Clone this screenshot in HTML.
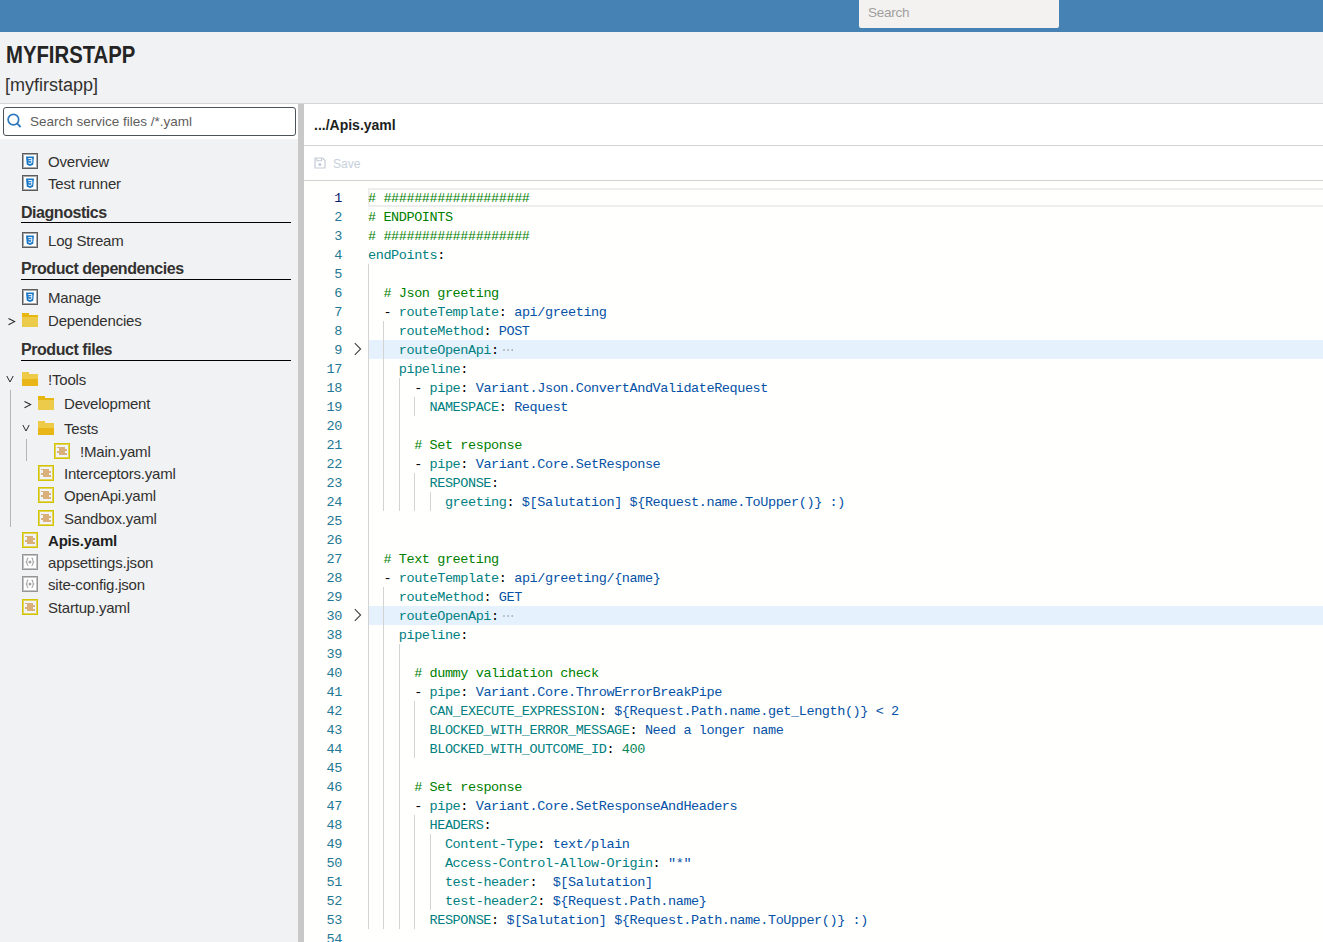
<!DOCTYPE html>
<html><head><meta charset="utf-8">
<style>
*{box-sizing:border-box}
html,body{margin:0;padding:0;width:1323px;height:942px;overflow:hidden;background:#f1f2f4;font-family:"Liberation Sans",sans-serif;color:#323130}
.topbar{position:absolute;left:0;top:0;width:1323px;height:32px;background:#4682b4}
.tsearch{position:absolute;left:859px;top:0;width:200px;height:28px;background:#f3f2f1;border-radius:0 0 2px 2px;font-size:13.5px;letter-spacing:-0.25px;color:#a19f9d;padding-left:9px;line-height:26px}
.title{position:absolute;left:6px;top:40px;font-weight:bold;font-size:23px;line-height:30px;color:#242424;transform:scaleX(0.883);transform-origin:0 0;white-space:nowrap}
.sub{position:absolute;left:5px;top:73px;font-size:18px;line-height:24px;color:#323130}
.hline{position:absolute;left:0;top:103px;width:1323px;height:1px;background:#d6d6d6}
.sidebar{position:absolute;left:0;top:104px;width:298px;height:838px;background:#f1f2f4}
.sbtop{position:absolute;left:0;top:104px;width:298px;height:35px;background:#fff}
.sinput{position:absolute;left:3px;top:107px;width:293px;height:29px;border:1px solid #4b5259;border-radius:3px;background:#fff}
.sinput .ph{position:absolute;left:26px;top:0;line-height:27px;font-size:13.5px;color:#605e5c}
.split{position:absolute;left:298px;top:104px;width:6px;height:838px;background:#c8c8c8}
.editor{position:absolute;left:304px;top:104px;width:1019px;height:838px;background:#fff}
.ehead{position:absolute;left:314px;top:114px;font-weight:bold;font-size:14px;line-height:22px;color:#201f1e}
.b1{position:absolute;left:304px;top:145px;width:1019px;height:1px;background:#d2d2d2}
.b2{position:absolute;left:304px;top:180px;width:1019px;height:1px;background:#d2d2d2}
.save{position:absolute;left:333px;top:154px;font-size:12px;line-height:20px;color:#c6cfdb}
.code{position:absolute;left:304px;top:181px;width:1019px;height:761px;background:#fffffe}
.curline{position:absolute;left:368px;top:188px;width:955px;height:19px;border:2px solid #eeeeee;border-right:none}
.ln{position:absolute;left:304px;width:38px;height:19px;line-height:19px;padding-top:1px;text-align:right;font-family:"Liberation Mono",monospace;font-size:13.5px;letter-spacing:-0.41px;color:#237893}
.ln.act{color:#0b216f}
.cl{position:absolute;left:368px;height:19px;line-height:19px;padding-top:1px;white-space:pre;font-family:"Liberation Mono",monospace;font-size:13.5px;letter-spacing:-0.41px;color:#000}
.foldbg{position:absolute;left:368px;width:955px;height:19px;background:#e5f1fd}
.ig{position:absolute;width:1px;height:19px;background:#d3d3d3}
.chev{position:absolute;left:353px}
.fe{position:absolute;top:0;margin-left:1.3px}
.ico{position:absolute;width:16px;height:16px;border:1px solid #5c5c5c;box-shadow:inset 0 0 0 1px #a9a9a9;background:#fff;display:flex;align-items:center;justify-content:center}
.ico svg{display:block}
.ico.yml{border-color:#d3c300;box-shadow:inset 0 0 0 1px #e0d45a;background:#f1f3fa}
.ico.jsn{border-color:#969696;box-shadow:inset 0 0 0 1px #c4c4c4;background:#fff}
.fold{position:absolute}
.tch{position:absolute}
.it{position:absolute;font-size:15px;letter-spacing:-0.2px;line-height:20px;margin-top:-9.5px;white-space:nowrap;color:#323130}
.it.b{font-weight:bold;color:#201f1e}
.hd{position:absolute;font-size:16px;letter-spacing:-0.45px;font-weight:bold;line-height:20px;margin-top:-9.5px;white-space:nowrap;color:#323130}
.ul{position:absolute;left:21px;width:270px;height:1px;background:#000}
.tg{position:absolute;width:1px;background:#b5b5b5}
</style></head><body>
<div class="topbar"></div>
<div class="tsearch">Search</div>
<div class="title">MYFIRSTAPP</div>
<div class="sub">[myfirstapp]</div>
<div class="hline"></div>
<div class="sidebar"></div>
<div class="sbtop"></div>
<div class="sinput"><svg style="position:absolute;left:2px;top:4px" width="18" height="18" viewBox="0 0 18 18"><circle cx="7.4" cy="7.6" r="5.3" fill="none" stroke="#3079bd" stroke-width="1.7"/><path d="M11.1 11.4 L14.6 15" stroke="#3079bd" stroke-width="1.8"/></svg><span class="ph">Search service files /*.yaml</span></div>
<div class="ico css" style="left:22px;top:153px"><svg width="12" height="12" viewBox="0 0 12 12"><path d="M2 1.5 H10 L9.2 9.8 L6 11 L2.8 9.8 Z" fill="#1b78c6"/><path d="M4.2 3.6 H7.9 L7.7 7.8 L6 8.5 L4.3 7.9" fill="none" stroke="#fff" stroke-width="1"/><path d="M4.6 5.7 H7.6" stroke="#fff" stroke-width="0.9"/></svg></div>
<div class="it" style="left:48px;top:161px">Overview</div>
<div class="ico css" style="left:22px;top:175px"><svg width="12" height="12" viewBox="0 0 12 12"><path d="M2 1.5 H10 L9.2 9.8 L6 11 L2.8 9.8 Z" fill="#1b78c6"/><path d="M4.2 3.6 H7.9 L7.7 7.8 L6 8.5 L4.3 7.9" fill="none" stroke="#fff" stroke-width="1"/><path d="M4.6 5.7 H7.6" stroke="#fff" stroke-width="0.9"/></svg></div>
<div class="it" style="left:48px;top:183px">Test runner</div>
<div class="hd" style="left:21px;top:212px">Diagnostics</div>
<div class="ul" style="top:222px"></div>
<div class="ico css" style="left:22px;top:232px"><svg width="12" height="12" viewBox="0 0 12 12"><path d="M2 1.5 H10 L9.2 9.8 L6 11 L2.8 9.8 Z" fill="#1b78c6"/><path d="M4.2 3.6 H7.9 L7.7 7.8 L6 8.5 L4.3 7.9" fill="none" stroke="#fff" stroke-width="1"/><path d="M4.6 5.7 H7.6" stroke="#fff" stroke-width="0.9"/></svg></div>
<div class="it" style="left:48px;top:240px">Log Stream</div>
<div class="hd" style="left:21px;top:268px">Product dependencies</div>
<div class="ul" style="top:279px"></div>
<div class="ico css" style="left:22px;top:289px"><svg width="12" height="12" viewBox="0 0 12 12"><path d="M2 1.5 H10 L9.2 9.8 L6 11 L2.8 9.8 Z" fill="#1b78c6"/><path d="M4.2 3.6 H7.9 L7.7 7.8 L6 8.5 L4.3 7.9" fill="none" stroke="#fff" stroke-width="1"/><path d="M4.6 5.7 H7.6" stroke="#fff" stroke-width="0.9"/></svg></div>
<div class="it" style="left:48px;top:297px">Manage</div>
<svg class="tch" style="left:8px;top:317.8px" width="8" height="8" viewBox="0 0 8 8"><path d="M0.5 0.5 L6.6 3.6 L0.5 6.7" fill="none" stroke="#262626" stroke-width="1.05"/></svg>
<svg class="fold" style="left:22px;top:311px" width="16" height="16" viewBox="0 0 16 16"><path d="M0 2 H7 V4 H16 V6.5 H0 Z" fill="#e8b70f"/><path d="M0 6 H16 V16 H0 Z" fill="#edcb4a"/></svg>
<div class="it" style="left:48px;top:320px">Dependencies</div>
<div class="hd" style="left:21px;top:349px">Product files</div>
<div class="ul" style="top:360px"></div>
<svg class="tch" style="left:6px;top:375px" width="8" height="8" viewBox="0 0 8 8"><path d="M0.8 1 L4 7 L7.2 1" fill="none" stroke="#2b2b2b" stroke-width="1"/></svg>
<svg class="fold" style="left:22px;top:370px" width="16" height="16" viewBox="0 0 16 16"><path d="M0 2 H7 V4 H16 V9.5 H0 Z" fill="#edca48"/><path d="M0 9 H16 V16 H0 Z" fill="#e8b717"/></svg>
<div class="it" style="left:48px;top:379px">!Tools</div>
<div class="tg" style="left:10px;top:390px;height:137px"></div>
<svg class="tch" style="left:24px;top:401px" width="8" height="8" viewBox="0 0 8 8"><path d="M0.5 0.5 L6.6 3.6 L0.5 6.7" fill="none" stroke="#262626" stroke-width="1.05"/></svg>
<svg class="fold" style="left:38px;top:394px" width="16" height="16" viewBox="0 0 16 16"><path d="M0 2 H7 V4 H16 V6.5 H0 Z" fill="#e8b70f"/><path d="M0 6 H16 V16 H0 Z" fill="#edcb4a"/></svg>
<div class="it" style="left:64px;top:403px">Development</div>
<svg class="tch" style="left:22px;top:424px" width="8" height="8" viewBox="0 0 8 8"><path d="M0.8 1 L4 7 L7.2 1" fill="none" stroke="#2b2b2b" stroke-width="1"/></svg>
<svg class="fold" style="left:38px;top:419px" width="16" height="16" viewBox="0 0 16 16"><path d="M0 2 H7 V4 H16 V9.5 H0 Z" fill="#edca48"/><path d="M0 9 H16 V16 H0 Z" fill="#e8b717"/></svg>
<div class="it" style="left:64px;top:428px">Tests</div>
<div class="tg" style="left:26px;top:439px;height:22px"></div>
<div class="ico yml" style="left:54px;top:443px"><svg width="12" height="12" viewBox="0 0 12 12" shape-rendering="crispEdges"><g fill="#d9af7a"><rect x="3" y="2.2" width="5.7" height="7.6"/><rect x="1.3" y="2.2" width="1.7" height="1.2"/><rect x="8.7" y="4.2" width="1.9" height="1.3"/><rect x="1.3" y="6.2" width="1.7" height="1.4"/><rect x="8.7" y="8.3" width="1.9" height="1.5"/></g></svg></div>
<div class="it" style="left:80px;top:451px">!Main.yaml</div>
<div class="ico yml" style="left:38px;top:465px"><svg width="12" height="12" viewBox="0 0 12 12" shape-rendering="crispEdges"><g fill="#d9af7a"><rect x="3" y="2.2" width="5.7" height="7.6"/><rect x="1.3" y="2.2" width="1.7" height="1.2"/><rect x="8.7" y="4.2" width="1.9" height="1.3"/><rect x="1.3" y="6.2" width="1.7" height="1.4"/><rect x="8.7" y="8.3" width="1.9" height="1.5"/></g></svg></div>
<div class="it" style="left:64px;top:473px">Interceptors.yaml</div>
<div class="ico yml" style="left:38px;top:487px"><svg width="12" height="12" viewBox="0 0 12 12" shape-rendering="crispEdges"><g fill="#d9af7a"><rect x="3" y="2.2" width="5.7" height="7.6"/><rect x="1.3" y="2.2" width="1.7" height="1.2"/><rect x="8.7" y="4.2" width="1.9" height="1.3"/><rect x="1.3" y="6.2" width="1.7" height="1.4"/><rect x="8.7" y="8.3" width="1.9" height="1.5"/></g></svg></div>
<div class="it" style="left:64px;top:495px">OpenApi.yaml</div>
<div class="ico yml" style="left:38px;top:510px"><svg width="12" height="12" viewBox="0 0 12 12" shape-rendering="crispEdges"><g fill="#d9af7a"><rect x="3" y="2.2" width="5.7" height="7.6"/><rect x="1.3" y="2.2" width="1.7" height="1.2"/><rect x="8.7" y="4.2" width="1.9" height="1.3"/><rect x="1.3" y="6.2" width="1.7" height="1.4"/><rect x="8.7" y="8.3" width="1.9" height="1.5"/></g></svg></div>
<div class="it" style="left:64px;top:518px">Sandbox.yaml</div>
<div class="ico yml" style="left:22px;top:532px"><svg width="12" height="12" viewBox="0 0 12 12" shape-rendering="crispEdges"><g fill="#d9af7a"><rect x="3" y="2.2" width="5.7" height="7.6"/><rect x="1.3" y="2.2" width="1.7" height="1.2"/><rect x="8.7" y="4.2" width="1.9" height="1.3"/><rect x="1.3" y="6.2" width="1.7" height="1.4"/><rect x="8.7" y="8.3" width="1.9" height="1.5"/></g></svg></div>
<div class="it b" style="left:48px;top:540px">Apis.yaml</div>
<div class="ico jsn" style="left:22px;top:554px"><svg width="12" height="12" viewBox="0 0 12 12"><path d="M4.3 1.9 C3 2.3 3 3.5 3 4.5 C3 5.4 2.4 5.9 1.7 5.9 C2.4 5.9 3 6.4 3 7.3 C3 8.3 3 9.5 4.3 9.9 M7.6 1.9 C8.9 2.3 8.9 3.5 8.9 4.5 C8.9 5.4 9.5 5.9 10.2 5.9 C9.5 5.9 8.9 6.4 8.9 7.3 C8.9 8.3 8.9 9.5 7.6 9.9" fill="none" stroke="#a3a3a3" stroke-width="1.1"/><circle cx="5.95" cy="5.9" r="1.5" fill="#a3a3a3"/></svg></div>
<div class="it" style="left:48px;top:562px">appsettings.json</div>
<div class="ico jsn" style="left:22px;top:576px"><svg width="12" height="12" viewBox="0 0 12 12"><path d="M4.3 1.9 C3 2.3 3 3.5 3 4.5 C3 5.4 2.4 5.9 1.7 5.9 C2.4 5.9 3 6.4 3 7.3 C3 8.3 3 9.5 4.3 9.9 M7.6 1.9 C8.9 2.3 8.9 3.5 8.9 4.5 C8.9 5.4 9.5 5.9 10.2 5.9 C9.5 5.9 8.9 6.4 8.9 7.3 C8.9 8.3 8.9 9.5 7.6 9.9" fill="none" stroke="#a3a3a3" stroke-width="1.1"/><circle cx="5.95" cy="5.9" r="1.5" fill="#a3a3a3"/></svg></div>
<div class="it" style="left:48px;top:584px">site-config.json</div>
<div class="ico yml" style="left:22px;top:599px"><svg width="12" height="12" viewBox="0 0 12 12" shape-rendering="crispEdges"><g fill="#d9af7a"><rect x="3" y="2.2" width="5.7" height="7.6"/><rect x="1.3" y="2.2" width="1.7" height="1.2"/><rect x="8.7" y="4.2" width="1.9" height="1.3"/><rect x="1.3" y="6.2" width="1.7" height="1.4"/><rect x="8.7" y="8.3" width="1.9" height="1.5"/></g></svg></div>
<div class="it" style="left:48px;top:607px">Startup.yaml</div>
<div class="split"></div>
<div class="editor"></div>
<div class="ehead">.../Apis.yaml</div>
<div class="b1"></div>
<svg style="position:absolute;left:314px;top:157px" width="12" height="12" viewBox="0 0 12 12"><path d="M1 1 H8.5 L11 3.5 V11 H1 Z" fill="none" stroke="#c5ccd6" stroke-width="1.2" stroke-linejoin="round"/><path d="M2.9 1.2 V3.8 H7.5 V1.2" fill="none" stroke="#c5ccd6" stroke-width="1.1"/><circle cx="5.9" cy="7.5" r="1.6" fill="#c5ccd6"/></svg>
<div class="save">Save</div>
<div class="b2"></div>
<div class="code"></div>
<div class="curline"></div>
<div class="ln act" style="top:188px">1</div>
<div class="cl" style="top:188px"><span style="color:#008000"># ###################</span></div>
<div class="ln" style="top:207px">2</div>
<div class="cl" style="top:207px"><span style="color:#008000"># ENDPOINTS</span></div>
<div class="ln" style="top:226px">3</div>
<div class="cl" style="top:226px"><span style="color:#008000"># ###################</span></div>
<div class="ln" style="top:245px">4</div>
<div class="cl" style="top:245px"><span style="color:#008080">endPoints</span><span style="color:#000000">:</span></div>
<div class="ln" style="top:264px">5</div>
<div class="ig" style="top:264px;left:368.0px"></div>
<div class="cl" style="top:264px"></div>
<div class="ln" style="top:283px">6</div>
<div class="ig" style="top:283px;left:368.0px"></div>
<div class="cl" style="top:283px">  <span style="color:#008000"># Json greeting</span></div>
<div class="ln" style="top:302px">7</div>
<div class="ig" style="top:302px;left:368.0px"></div>
<div class="cl" style="top:302px">  <span style="color:#000000">- </span><span style="color:#008080">routeTemplate</span><span style="color:#000000">:</span> <span style="color:#0451a5">api/greeting</span></div>
<div class="ln" style="top:321px">8</div>
<div class="ig" style="top:321px;left:368.0px"></div>
<div class="ig" style="top:321px;left:383.4px"></div>
<div class="cl" style="top:321px">    <span style="color:#008080">routeMethod</span><span style="color:#000000">:</span> <span style="color:#0451a5">POST</span></div>
<div class="ln" style="top:340px">9</div>
<div class="foldbg" style="top:340px"></div>
<svg class="chev" style="top:342px" width="10" height="14" viewBox="0 0 10 14"><path d="M1.8 1.2 L7.6 7 L1.8 12.8" fill="none" stroke="#424242" stroke-width="1.1"/></svg>
<div class="ig" style="top:340px;left:368.0px"></div>
<div class="ig" style="top:340px;left:383.4px"></div>
<div class="cl" style="top:340px">    <span style="color:#008080">routeOpenApi</span><span style="color:#000000">:</span><svg class="fe" width="14" height="19" viewBox="0 0 14 19"><g fill="#959595"><rect x="3.3" y="9.3" width="1.4" height="1.4"/><rect x="7.4" y="9.3" width="1.4" height="1.4"/><rect x="11.5" y="9.3" width="1.4" height="1.4"/></g></svg></div>
<div class="ln" style="top:359px">17</div>
<div class="ig" style="top:359px;left:368.0px"></div>
<div class="ig" style="top:359px;left:383.4px"></div>
<div class="cl" style="top:359px">    <span style="color:#008080">pipeline</span><span style="color:#000000">:</span></div>
<div class="ln" style="top:378px">18</div>
<div class="ig" style="top:378px;left:368.0px"></div>
<div class="ig" style="top:378px;left:383.4px"></div>
<div class="ig" style="top:378px;left:398.8px"></div>
<div class="cl" style="top:378px">      <span style="color:#000000">- </span><span style="color:#008080">pipe</span><span style="color:#000000">:</span> <span style="color:#0451a5">Variant.Json.ConvertAndValidateRequest</span></div>
<div class="ln" style="top:397px">19</div>
<div class="ig" style="top:397px;left:368.0px"></div>
<div class="ig" style="top:397px;left:383.4px"></div>
<div class="ig" style="top:397px;left:398.8px"></div>
<div class="ig" style="top:397px;left:414.1px"></div>
<div class="cl" style="top:397px">        <span style="color:#008080">NAMESPACE</span><span style="color:#000000">:</span> <span style="color:#0451a5">Request</span></div>
<div class="ln" style="top:416px">20</div>
<div class="ig" style="top:416px;left:368.0px"></div>
<div class="ig" style="top:416px;left:383.4px"></div>
<div class="ig" style="top:416px;left:398.8px"></div>
<div class="cl" style="top:416px"></div>
<div class="ln" style="top:435px">21</div>
<div class="ig" style="top:435px;left:368.0px"></div>
<div class="ig" style="top:435px;left:383.4px"></div>
<div class="ig" style="top:435px;left:398.8px"></div>
<div class="cl" style="top:435px">      <span style="color:#008000"># Set response</span></div>
<div class="ln" style="top:454px">22</div>
<div class="ig" style="top:454px;left:368.0px"></div>
<div class="ig" style="top:454px;left:383.4px"></div>
<div class="ig" style="top:454px;left:398.8px"></div>
<div class="cl" style="top:454px">      <span style="color:#000000">- </span><span style="color:#008080">pipe</span><span style="color:#000000">:</span> <span style="color:#0451a5">Variant.Core.SetResponse</span></div>
<div class="ln" style="top:473px">23</div>
<div class="ig" style="top:473px;left:368.0px"></div>
<div class="ig" style="top:473px;left:383.4px"></div>
<div class="ig" style="top:473px;left:398.8px"></div>
<div class="ig" style="top:473px;left:414.1px"></div>
<div class="cl" style="top:473px">        <span style="color:#008080">RESPONSE</span><span style="color:#000000">:</span></div>
<div class="ln" style="top:492px">24</div>
<div class="ig" style="top:492px;left:368.0px"></div>
<div class="ig" style="top:492px;left:383.4px"></div>
<div class="ig" style="top:492px;left:398.8px"></div>
<div class="ig" style="top:492px;left:414.1px"></div>
<div class="ig" style="top:492px;left:429.5px"></div>
<div class="cl" style="top:492px">          <span style="color:#008080">greeting</span><span style="color:#000000">:</span> <span style="color:#0451a5">$[Salutation] ${Request.name.ToUpper()} :)</span></div>
<div class="ln" style="top:511px">25</div>
<div class="ig" style="top:511px;left:368.0px"></div>
<div class="cl" style="top:511px"></div>
<div class="ln" style="top:530px">26</div>
<div class="ig" style="top:530px;left:368.0px"></div>
<div class="cl" style="top:530px"></div>
<div class="ln" style="top:549px">27</div>
<div class="ig" style="top:549px;left:368.0px"></div>
<div class="cl" style="top:549px">  <span style="color:#008000"># Text greeting</span></div>
<div class="ln" style="top:568px">28</div>
<div class="ig" style="top:568px;left:368.0px"></div>
<div class="cl" style="top:568px">  <span style="color:#000000">- </span><span style="color:#008080">routeTemplate</span><span style="color:#000000">:</span> <span style="color:#0451a5">api/greeting/{name}</span></div>
<div class="ln" style="top:587px">29</div>
<div class="ig" style="top:587px;left:368.0px"></div>
<div class="ig" style="top:587px;left:383.4px"></div>
<div class="cl" style="top:587px">    <span style="color:#008080">routeMethod</span><span style="color:#000000">:</span> <span style="color:#0451a5">GET</span></div>
<div class="ln" style="top:606px">30</div>
<div class="foldbg" style="top:606px"></div>
<svg class="chev" style="top:608px" width="10" height="14" viewBox="0 0 10 14"><path d="M1.8 1.2 L7.6 7 L1.8 12.8" fill="none" stroke="#424242" stroke-width="1.1"/></svg>
<div class="ig" style="top:606px;left:368.0px"></div>
<div class="ig" style="top:606px;left:383.4px"></div>
<div class="cl" style="top:606px">    <span style="color:#008080">routeOpenApi</span><span style="color:#000000">:</span><svg class="fe" width="14" height="19" viewBox="0 0 14 19"><g fill="#959595"><rect x="3.3" y="9.3" width="1.4" height="1.4"/><rect x="7.4" y="9.3" width="1.4" height="1.4"/><rect x="11.5" y="9.3" width="1.4" height="1.4"/></g></svg></div>
<div class="ln" style="top:625px">38</div>
<div class="ig" style="top:625px;left:368.0px"></div>
<div class="ig" style="top:625px;left:383.4px"></div>
<div class="cl" style="top:625px">    <span style="color:#008080">pipeline</span><span style="color:#000000">:</span></div>
<div class="ln" style="top:644px">39</div>
<div class="ig" style="top:644px;left:368.0px"></div>
<div class="ig" style="top:644px;left:383.4px"></div>
<div class="ig" style="top:644px;left:398.8px"></div>
<div class="cl" style="top:644px"></div>
<div class="ln" style="top:663px">40</div>
<div class="ig" style="top:663px;left:368.0px"></div>
<div class="ig" style="top:663px;left:383.4px"></div>
<div class="ig" style="top:663px;left:398.8px"></div>
<div class="cl" style="top:663px">      <span style="color:#008000"># dummy validation check</span></div>
<div class="ln" style="top:682px">41</div>
<div class="ig" style="top:682px;left:368.0px"></div>
<div class="ig" style="top:682px;left:383.4px"></div>
<div class="ig" style="top:682px;left:398.8px"></div>
<div class="cl" style="top:682px">      <span style="color:#000000">- </span><span style="color:#008080">pipe</span><span style="color:#000000">:</span> <span style="color:#0451a5">Variant.Core.ThrowErrorBreakPipe</span></div>
<div class="ln" style="top:701px">42</div>
<div class="ig" style="top:701px;left:368.0px"></div>
<div class="ig" style="top:701px;left:383.4px"></div>
<div class="ig" style="top:701px;left:398.8px"></div>
<div class="ig" style="top:701px;left:414.1px"></div>
<div class="cl" style="top:701px">        <span style="color:#008080">CAN_EXECUTE_EXPRESSION</span><span style="color:#000000">:</span> <span style="color:#0451a5">${Request.Path.name.get_Length()} &lt; 2</span></div>
<div class="ln" style="top:720px">43</div>
<div class="ig" style="top:720px;left:368.0px"></div>
<div class="ig" style="top:720px;left:383.4px"></div>
<div class="ig" style="top:720px;left:398.8px"></div>
<div class="ig" style="top:720px;left:414.1px"></div>
<div class="cl" style="top:720px">        <span style="color:#008080">BLOCKED_WITH_ERROR_MESSAGE</span><span style="color:#000000">:</span> <span style="color:#0451a5">Need a longer name</span></div>
<div class="ln" style="top:739px">44</div>
<div class="ig" style="top:739px;left:368.0px"></div>
<div class="ig" style="top:739px;left:383.4px"></div>
<div class="ig" style="top:739px;left:398.8px"></div>
<div class="ig" style="top:739px;left:414.1px"></div>
<div class="cl" style="top:739px">        <span style="color:#008080">BLOCKED_WITH_OUTCOME_ID</span><span style="color:#000000">:</span> <span style="color:#098658">400</span></div>
<div class="ln" style="top:758px">45</div>
<div class="ig" style="top:758px;left:368.0px"></div>
<div class="ig" style="top:758px;left:383.4px"></div>
<div class="ig" style="top:758px;left:398.8px"></div>
<div class="cl" style="top:758px"></div>
<div class="ln" style="top:777px">46</div>
<div class="ig" style="top:777px;left:368.0px"></div>
<div class="ig" style="top:777px;left:383.4px"></div>
<div class="ig" style="top:777px;left:398.8px"></div>
<div class="cl" style="top:777px">      <span style="color:#008000"># Set response</span></div>
<div class="ln" style="top:796px">47</div>
<div class="ig" style="top:796px;left:368.0px"></div>
<div class="ig" style="top:796px;left:383.4px"></div>
<div class="ig" style="top:796px;left:398.8px"></div>
<div class="cl" style="top:796px">      <span style="color:#000000">- </span><span style="color:#008080">pipe</span><span style="color:#000000">:</span> <span style="color:#0451a5">Variant.Core.SetResponseAndHeaders</span></div>
<div class="ln" style="top:815px">48</div>
<div class="ig" style="top:815px;left:368.0px"></div>
<div class="ig" style="top:815px;left:383.4px"></div>
<div class="ig" style="top:815px;left:398.8px"></div>
<div class="ig" style="top:815px;left:414.1px"></div>
<div class="cl" style="top:815px">        <span style="color:#008080">HEADERS</span><span style="color:#000000">:</span></div>
<div class="ln" style="top:834px">49</div>
<div class="ig" style="top:834px;left:368.0px"></div>
<div class="ig" style="top:834px;left:383.4px"></div>
<div class="ig" style="top:834px;left:398.8px"></div>
<div class="ig" style="top:834px;left:414.1px"></div>
<div class="ig" style="top:834px;left:429.5px"></div>
<div class="cl" style="top:834px">          <span style="color:#008080">Content-Type</span><span style="color:#000000">:</span> <span style="color:#0451a5">text/plain</span></div>
<div class="ln" style="top:853px">50</div>
<div class="ig" style="top:853px;left:368.0px"></div>
<div class="ig" style="top:853px;left:383.4px"></div>
<div class="ig" style="top:853px;left:398.8px"></div>
<div class="ig" style="top:853px;left:414.1px"></div>
<div class="ig" style="top:853px;left:429.5px"></div>
<div class="cl" style="top:853px">          <span style="color:#008080">Access-Control-Allow-Origin</span><span style="color:#000000">:</span> <span style="color:#0451a5">&quot;*&quot;</span></div>
<div class="ln" style="top:872px">51</div>
<div class="ig" style="top:872px;left:368.0px"></div>
<div class="ig" style="top:872px;left:383.4px"></div>
<div class="ig" style="top:872px;left:398.8px"></div>
<div class="ig" style="top:872px;left:414.1px"></div>
<div class="ig" style="top:872px;left:429.5px"></div>
<div class="cl" style="top:872px">          <span style="color:#008080">test-header</span><span style="color:#000000">:</span>  <span style="color:#0451a5">$[Salutation]</span></div>
<div class="ln" style="top:891px">52</div>
<div class="ig" style="top:891px;left:368.0px"></div>
<div class="ig" style="top:891px;left:383.4px"></div>
<div class="ig" style="top:891px;left:398.8px"></div>
<div class="ig" style="top:891px;left:414.1px"></div>
<div class="ig" style="top:891px;left:429.5px"></div>
<div class="cl" style="top:891px">          <span style="color:#008080">test-header2</span><span style="color:#000000">:</span> <span style="color:#0451a5">${Request.Path.name}</span></div>
<div class="ln" style="top:910px">53</div>
<div class="ig" style="top:910px;left:368.0px"></div>
<div class="ig" style="top:910px;left:383.4px"></div>
<div class="ig" style="top:910px;left:398.8px"></div>
<div class="ig" style="top:910px;left:414.1px"></div>
<div class="cl" style="top:910px">        <span style="color:#008080">RESPONSE</span><span style="color:#000000">:</span> <span style="color:#0451a5">$[Salutation] ${Request.Path.name.ToUpper()} :)</span></div>
<div class="ln" style="top:929px">54</div>
<div class="cl" style="top:929px"></div>
</body></html>
